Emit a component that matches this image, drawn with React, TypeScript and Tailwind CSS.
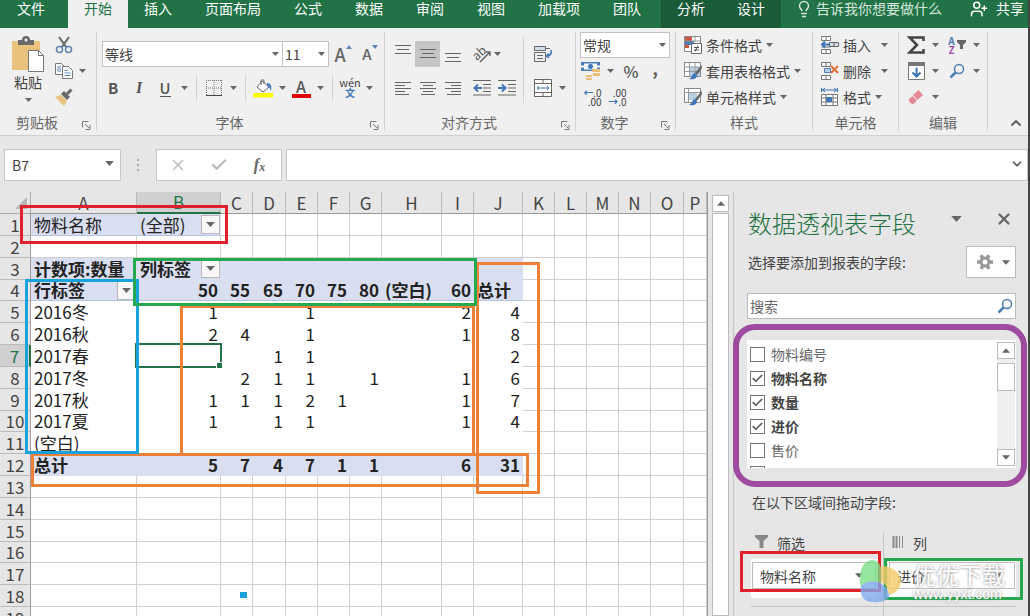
import React, { useState } from "react";
import { Check, ChevronDown, ChevronUp, Lightbulb, UserPlus, X } from "lucide-react";

const TABS = ["插入", "页面布局", "公式", "数据", "审阅", "视图", "加载项", "团队"];

const COLUMNS = [
  { id: "A", width: "w-[106px]" },
  { id: "B", width: "w-[84px]" },
  { id: "C", width: "w-8" },
  { id: "D", width: "w-[33px]" },
  { id: "E", width: "w-8" },
  { id: "F", width: "w-8" },
  { id: "G", width: "w-8" },
  { id: "H", width: "w-[60px]" },
  { id: "I", width: "w-8" },
  { id: "J", width: "w-[49px]" },
  { id: "K", width: "w-8" },
  { id: "L", width: "w-8" },
  { id: "M", width: "w-8" },
  { id: "N", width: "w-8" },
  { id: "O", width: "w-[33px]" },
  { id: "P", width: "" },
];

const CELLS: Record<number, Record<string, string>> = {
  1: { A: "物料名称", B: "(全部)" },
  3: { A: "计数项:数量", B: "列标签" },
  4: { A: "行标签", B: "50", C: "55", D: "65", E: "70", F: "75", G: "80", H: "(空白)", I: "60", J: "总计" },
  5: { A: "2016冬", B: "1", E: "1", I: "2", J: "4" },
  6: { A: "2016秋", B: "2", C: "4", E: "1", I: "1", J: "8" },
  7: { A: "2017春", D: "1", E: "1", J: "2" },
  8: { A: "2017冬", C: "2", D: "1", E: "1", G: "1", I: "1", J: "6" },
  9: { A: "2017秋", B: "1", C: "1", D: "1", E: "2", F: "1", I: "1", J: "7" },
  10: { A: "2017夏", B: "1", D: "1", E: "1", I: "1", J: "4" },
  11: { A: "(空白)" },
  12: { A: "总计", B: "5", C: "7", D: "4", E: "7", F: "1", G: "1", I: "6", J: "31" },
};

const ROWS = Array.from({ length: 19 }, (_, i) => i + 1);
const SHORT_ROWS = [4, 10, 16];
const FILTER_CELLS = ["B1", "B3", "A4"];

const FIELDS = [
  { name: "物料编号", checked: false },
  { name: "物料名称", checked: true },
  { name: "数量", checked: true },
  { name: "进价", checked: true },
  { name: "售价", checked: false },
];

function Caret({ className = "w-[7px] h-1" }: { className?: string }) {
  return (
    <svg viewBox="0 0 7 4" className={`shrink-0 fill-[#666] ${className}`}>
      <path d="M0 0h7L3.5 4z" />
    </svg>
  );
}

function Magnifier({ className = "" }: { className?: string }) {
  return (
    <svg viewBox="0 0 16 16" className={`w-4 h-4 fill-none stroke-[#4a7db5] ${className}`}>
      <circle cx="10" cy="6" r="4.5" strokeWidth="1.5" />
      <path d="M6.5 9.500L1.500 14.500" strokeWidth="2.5" />
    </svg>
  );
}

function ToolButton({
  label,
  className = "w-[25px] h-[25px]",
  children,
}: {
  label: string;
  className?: string;
  children: React.ReactNode;
}) {
  return (
    <button aria-label={label} className={`flex items-center justify-center shrink-0 ${className}`}>
      {children}
    </button>
  );
}

// icon with a drop-down arrow to its right
function SplitButton({ label, children }: { label: string; children: React.ReactNode }) {
  return (
    <button aria-label={label} className="flex items-center h-[25px] shrink-0">
      <span className="w-[22px] flex justify-center">{children}</span>
      <span className="w-4 flex justify-center">
        <Caret />
      </span>
    </button>
  );
}

function RibbonSelect({ label, value, className }: { label: string; value: string; className: string }) {
  return (
    <div className={`relative ${className}`}>
      <select
        aria-label={label}
        className="appearance-none w-full h-full bg-white border border-[#c3c3c3] pl-0.5 text-sm text-[#444]"
      >
        <option>{value}</option>
      </select>
      <Caret className="w-[7px] h-1 absolute right-1 top-1/2 -mt-0.5 pointer-events-none" />
    </div>
  );
}

function Group({
  title,
  width,
  launcher = false,
  children,
}: {
  title: string;
  width: string;
  launcher?: boolean;
  children: React.ReactNode;
}) {
  return (
    <section className={`flex flex-col shrink-0 border-r border-[#d2d2d2] ${width}`}>
      <div className="flex-1">{children}</div>
      <div className="flex items-center h-[18px] text-sm leading-[18px] text-[#666]">
        <span className="flex-1 text-center">{title}</span>
        {launcher && (
          <button aria-label={`${title}设置`} className="w-[22px] pt-1.5 pl-2">
            <svg viewBox="0 0 9 9" className="w-[9px] h-[9px] fill-none stroke-[#777]">
              <path d="M.5 6.5v-6h6M3 3l4 4M8 4v4.5H3.5" />
            </svg>
          </button>
        )}
      </div>
    </section>
  );
}

function Lines({ d }: { d: string }) {
  return (
    <svg viewBox="0 0 16 16" className="w-4 h-4 fill-none stroke-[#666]">
      <path d={d} />
    </svg>
  );
}

function Separator() {
  return <span className="w-px h-[26px] bg-[#d2d2d2] ml-1 mr-[6px]" />;
}

function ClipboardGroup() {
  return (
    <Group title="剪贴板" width="w-[97px]" launcher>
      <div className="flex pl-3">
        <button className="flex flex-col items-center w-8 pt-1 text-sm leading-5 text-[#444]">
          <svg viewBox="0 0 34 36" className="w-[34px] h-9">
            <path d="M1 5h28v29H1z" fill="#e9c27c" />
            <path d="M7 9V4h4a4 4 0 0 1 8 0h4v5z" fill="#6a6a6a" />
            <circle cx="15" cy="4" r="1.5" fill="#f0f0f0" />
            <path d="M17.5 14.500h10l5 5v16h-15z" fill="#fff" stroke="#777" />
            <path d="M27.500 14.500v5h5" fill="none" stroke="#777" />
          </svg>
          <span>粘贴</span>
          <Caret className="w-[7px] h-1 mt-1.5" />
        </button>
        <div className="flex flex-col ml-[9px]">
          <ToolButton label="剪切" className="w-[22px] h-[26px]">
            <svg viewBox="0 0 18 18" className="w-[18px] h-[18px] fill-none">
              <path d="M4 1l7.500 10.500M14 1L6.500 11.500" stroke="#666" strokeWidth="2" />
              <circle cx="4.500" cy="13.500" r="3" stroke="#5d86b5" strokeWidth="1.500" />
              <circle cx="13.500" cy="13.500" r="3" stroke="#5d86b5" strokeWidth="1.500" />
            </svg>
          </ToolButton>
          <div className="flex items-center">
            <ToolButton label="复制" className="w-[22px] h-[26px]">
              <svg viewBox="0 0 18 18" className="w-[18px] h-[18px]">
                <path d="M.5 1.500h6l3 3v8h-9z" fill="#fff" stroke="#777" />
                <path d="M7.500 4.500h6l4 4v8h-10z" fill="#fff" stroke="#777" />
                <path d="M2 5h4M2 7h4M2 9h4M9.500 8.500h3M9.500 11h6M9.500 13.500h6" stroke="#5d86b5" />
              </svg>
            </ToolButton>
            <Caret className="w-[7px] h-1 ml-1" />
          </div>
          <ToolButton label="格式刷" className="w-[22px] h-[26px]">
            <svg viewBox="0 0 18 18" className="w-[18px] h-[18px]">
              <path d="M0 9l6-2 6 6-3 5z" fill="#e9c27c" />
              <path d="M6 6l3-3 6 6-3 3z" fill="#666" />
              <path d="M12 6l4.500-4.500" stroke="#666" strokeWidth="3" />
            </svg>
          </ToolButton>
        </div>
      </div>
    </Group>
  );
}

function FontGroup() {
  return (
    <Group title="字体" width="w-[288px]" launcher>
      <div className="flex items-center pt-[9px] pl-[5px]">
        <RibbonSelect label="字体" value="等线" className="w-[181px] h-[26px]" />
        <RibbonSelect label="字号" value="11" className="w-[47px] h-[26px] -ml-px" />
        <ToolButton label="增大字号" className="w-[28px] h-[26px]">
          <span className="text-lg leading-5 text-[#666] font-medium">A</span>
          <svg viewBox="0 0 6 4" className="w-1.5 h-1 mb-3.5 fill-[#5d86b5]">
            <path d="M0 4h6L3 0z" />
          </svg>
        </ToolButton>
        <ToolButton label="减小字号" className="w-[26px] h-[26px]">
          <span className="text-[15px] leading-5 text-[#666] font-medium">A</span>
          <svg viewBox="0 0 6 4" className="w-1.5 h-1 mb-3.5 fill-[#5d86b5]">
            <path d="M0 0h6L3 4z" />
          </svg>
        </ToolButton>
      </div>
      <div className="flex items-center mt-2 pl-[3px] text-[#555]">
        <ToolButton label="加粗" className="w-[26px] h-[25px] font-bold text-[15px]">B</ToolButton>
        <ToolButton label="倾斜" className="w-[26px] h-[25px] italic font-['Liberation_Serif',serif] text-base font-bold">
          I
        </ToolButton>
        <span className="w-0.5" />
        <SplitButton label="下划线">
          <span className="text-[15px] leading-4 font-medium border-b border-[#555]">U</span>
        </SplitButton>
        <Separator />
        <SplitButton label="边框">
          <svg viewBox="0 0 16 16" className="w-4 h-4 fill-none stroke-[#777]">
            <path d="M0 .5h16M.5 0v15M15.500 0v15M8 0v15M0 8h16" strokeDasharray="1 1" />
            <path d="M0 15.500h16" stroke="#444" />
          </svg>
        </SplitButton>
        <Separator />
        <SplitButton label="填充颜色">
          <svg viewBox="0 0 20 20" className="w-5 h-5">
            <path d="M0 15h20v4.500H0z" fill="#ffff00" />
            <path d="M9 3l7 6-6 5-6-5z" fill="#fff" stroke="#666" />
            <path d="M8 7V2.500a2 2 0 0 1 3 0V6" fill="none" stroke="#666" />
            <path d="M14 5c4 0 5 3 4 8-1-3-2-4-4-5z" fill="#4a7db5" />
          </svg>
        </SplitButton>
        <SplitButton label="字体颜色">
          <span className="w-[19px] h-[19px] text-base leading-[15px] font-medium text-center border-b-4 border-[#e00000]">
            A
          </span>
        </SplitButton>
        <Separator />
        <SplitButton label="拼音">
          <span className="flex flex-col items-center text-[#444]">
            <span className="text-[11px] leading-[9px]">wén</span>
            <span className="text-[10px] leading-[11px] font-bold text-[#3f76b5]">文</span>
          </span>
        </SplitButton>
      </div>
    </Group>
  );
}

function AlignmentGroup() {
  return (
    <Group title="对齐方式" width="w-[191px]" launcher>
      <div className="flex pl-[5px] pt-[9px]">
        <div className="w-[133px]">
          <div className="flex">
            <ToolButton label="顶端对齐" className="w-[25px] h-[25px] pb-1.5">
              <Lines d="M0 2.500h16M2 6.500h12M0 10.500h16" />
            </ToolButton>
            <ToolButton label="垂直居中" className="w-[25px] h-[26px] bg-[#c5c5c5]">
              <Lines d="M0 3.500h16M2 7.500h12M0 11.500h16" />
            </ToolButton>
            <ToolButton label="底端对齐" className="w-[25px] h-[26px] pt-1">
              <Lines d="M0 5.500h16M2 9.500h12M0 13.500h16" />
            </ToolButton>
            <span className="w-1" />
            <ToolButton label="方向">
              <svg viewBox="0 0 20 20" className="w-5 h-5">
                <text x="1" y="13" transform="rotate(-42 8 10)" fontSize="12" fill="#555">
                  ab
                </text>
                <path d="M8 18L18 8M14 8h4v4" fill="none" stroke="#666" strokeWidth="1.500" />
              </svg>
            </ToolButton>
            <Caret className="w-[7px] h-1 mt-[11px]" />
          </div>
          <div className="flex mt-2">
            <ToolButton label="左对齐">
              <Lines d="M0 2.500h16M0 5.500h10M0 8.500h16M0 11.500h10M0 14.500h14" />
            </ToolButton>
            <ToolButton label="居中">
              <Lines d="M0 2.500h16M3 5.500h10M0 8.500h16M3 11.500h10M1 14.500h14" />
            </ToolButton>
            <ToolButton label="右对齐">
              <Lines d="M0 2.500h16M6 5.500h10M0 8.500h16M6 11.500h10M2 14.500h14" />
            </ToolButton>
            <span className="w-1" />
            <ToolButton label="减少缩进">
              <svg viewBox="0 0 18 16" className="w-[18px] h-4 fill-none stroke-[#666]">
                <path d="M0 .5h18M10 4.500h8M10 8h8M10 11.500h8M0 15h18" />
                <path d="M9 8H2M5 4.500L1.500 8 5 11.500" stroke="#3f76b5" strokeWidth="2" />
              </svg>
            </ToolButton>
            <ToolButton label="增加缩进">
              <svg viewBox="0 0 18 16" className="w-[18px] h-4 fill-none stroke-[#666]">
                <path d="M0 .5h18M10 4.500h8M10 8h8M10 11.500h8M0 15h18" />
                <path d="M0 8h7M4 4.500L7.500 8 4 11.500" stroke="#3f76b5" strokeWidth="2" />
              </svg>
            </ToolButton>
          </div>
        </div>
        <span className="w-px h-[66px] -mt-1 bg-[#d2d2d2]" />
        <div className="ml-[6px]">
          <ToolButton label="自动换行" className="w-[25px] h-[26px]">
            <svg viewBox="0 0 20 18" className="w-5 h-[18px] fill-none stroke-[#666]">
              <path d="M1.500 1.500h11v4h-11z" fill="#d3e0ee" />
              <path d="M12 3.500h5M1.500 7.500h11v9h-11zM4 10.500h6M4 13.500h6" />
              <path d="M18 5c1 4-1 6-4 6M16 8.500L13.500 11l2.500 2" stroke="#3f76b5" strokeWidth="1.500" />
            </svg>
          </ToolButton>
          <div className="flex items-center mt-2">
            <ToolButton label="合并后居中">
              <svg viewBox="0 0 18 18" className="w-[18px] h-[18px] fill-none stroke-[#666]">
                <path d="M.5.500h17v17H.5z" fill="#fff" />
                <path d="M.5 4.500h17M.5 13.500h17M9 .5v4M9 13.500v4" />
                <path d="M3 9h12M5 7L3 9l2 2M13 7l2 2-2 2" stroke="#3f76b5" />
              </svg>
            </ToolButton>
            <Caret className="w-[7px] h-1 ml-1" />
          </div>
        </div>
      </div>
    </Group>
  );
}

function NumberGroup() {
  return (
    <Group title="数字" width="w-[100px]" launcher>
      <div className="pl-1">
        <RibbonSelect label="数字格式" value="常规" className="w-[90px] h-[26px]" />
        <div className="flex items-center h-[26px] text-[#555]">
          <SplitButton label="会计数字格式">
            <svg viewBox="0 0 20 20" className="w-5 h-5">
              <path d="M0 1h19v9H0z" fill="#4a7db5" />
              <path d="M3 2.500h13v6H3zM0 4.500h19v2H0z" fill="#f5f8fb" />
              <circle cx="9.500" cy="5.500" r="2.500" fill="#3f76b5" />
              <path d="M11 8h8v3h-8zM12 12h7v3h-7zM5 14h6v2H5zM5 17h6v2H5z" fill="#ecc07a" />
            </svg>
          </SplitButton>
          <ToolButton label="百分比样式" className="w-[26px] h-[25px] text-base font-medium">%</ToolButton>
          <ToolButton label="千位分隔样式" className="w-[22px] h-[25px] pb-1.5 text-base font-bold">,</ToolButton>
        </div>
        <div className="flex items-center h-[26px] text-[10px] leading-[9px] text-[#444]">
          <ToolButton label="增加小数位数" className="w-[25px] h-[25px]">
            <span className="text-right">
              <span className="block">
                <b className="text-[#3f76b5]">←</b>.0
              </span>
              <span className="block">.00</span>
            </span>
          </ToolButton>
          <ToolButton label="减少小数位数" className="w-[25px] h-[25px]">
            <span className="text-right">
              <span className="block">.00</span>
              <span className="block">
                <b className="text-[#3f76b5]">→</b>.0
              </span>
            </span>
          </ToolButton>
        </div>
      </div>
    </Group>
  );
}

function TextTool({ text, wide = false, children }: { text: string; wide?: boolean; children: React.ReactNode }) {
  return (
    <button className="flex items-center h-[26px] text-sm text-[#444] whitespace-nowrap">
      <svg viewBox="0 0 18 18" className="w-[18px] h-[18px] mr-1 shrink-0">
        {children}
      </svg>
      {text}
      <Caret className={wide ? "w-[7px] h-1 ml-2.5" : "w-[7px] h-1 ml-1"} />
    </button>
  );
}

function StylesGroup() {
  return (
    <Group title="样式" width="w-[137px]">
      <div className="pl-2">
        <TextTool text="条件格式">
          <path d="M.5.500h16v15H.5z" fill="#fff" stroke="#888" />
          <path d="M1 1h7v4H1zM1 9h4v3H1z" fill="#d0563f" />
          <path d="M1 5h9v4H1z" fill="#4a7db5" />
          <path d="M11 1v5M1 5h15" stroke="#999" />
          <path d="M7.500 7.500h10v10h-10z" fill="#fff" stroke="#666" />
          <path d="M10 11.500h5M10 14h5M14 9.500l-3 6" stroke="#555" />
        </TextTool>
        <TextTool text="套用表格格式">
          <path d="M.5.500h16v14H.5z" fill="#fff" stroke="#888" />
          <path d="M5 5h11v9H5z" fill="#b9cfe6" />
          <path d="M.5 5h16M.5 9.500h16M5.500.5v14M11 .5v14" stroke="#999" />
          <path d="M17.500 3L11 11l2 2 5-7z" fill="#666" />
          <path d="M11 11c-3 0-2 4-6 6 4 1 8 0 8-4z" fill="#3f76b5" />
        </TextTool>
        <TextTool text="单元格样式">
          <path d="M.5.500h16v14H.5z" fill="#fff" stroke="#888" />
          <path d="M4 5h9v7H4z" fill="#b9cfe6" />
          <path d="M.5 4.500h16M4.500.5v14" stroke="#999" />
          <path d="M17.500 3L11 11l2 2 5-7z" fill="#666" />
          <path d="M11 11c-3 0-2 4-6 6 4 1 8 0 8-4z" fill="#3f76b5" />
        </TextTool>
      </div>
    </Group>
  );
}

function CellsGroup() {
  return (
    <Group title="单元格" width="w-[86px]">
      <div className="pl-2">
        <TextTool text="插入" wide>
          <path d="M.5.500h9v4h-9zM5 .5v4M.5 13.500h9v4h-9zM5 13.500v4M.5 11h9" fill="#fff" stroke="#777" />
          <path d="M8.500 6.500h9v4h-9zM13 6.500v4" fill="#d3dce6" stroke="#666" />
          <path d="M9 8.500H1M4 5.500l-3 3 3 3" fill="none" stroke="#3f76b5" strokeWidth="2" />
        </TextTool>
        <TextTool text="删除" wide>
          <path d="M.5.500h9v4h-9zM5 .5v4M.5 13.500h9v4h-9zM5 13.500v4" fill="#fff" stroke="#777" />
          <path d="M3.500 6.500h6v4h-6z" fill="#b9cfe6" stroke="#4a7db5" />
          <path d="M10 4l7 7M17 4l-7 7" stroke="#e06c3c" strokeWidth="2" />
        </TextTool>
        <TextTool text="格式">
          <path d="M1 2h15M4 0L1.500 2 4 4M13 0l2.500 2L13 4M.5 0v4M16.500 0v4" fill="none" stroke="#3f76b5" />
          <path d="M.5 6.500h16v11H.5z" fill="#fff" stroke="#777" />
          <path d="M.5 10h16M.5 14h16M5 6.500v11M12 6.500v11" stroke="#777" />
          <path d="M5 9h6v5H5z" fill="#3f76b5" />
        </TextTool>
      </div>
    </Group>
  );
}

function EditingGroup() {
  return (
    <Group title="编辑" width="w-[89px]">
      <div className="grid grid-cols-2 pl-1.5">
        <div className="h-[26px]">
          <SplitButton label="自动求和">
            <svg viewBox="0 0 18 18" className="w-[18px] h-[18px] fill-none stroke-[#444]">
              <path d="M16.500 5V1.500H2.500L10 9l-7.500 7.500h14V13" strokeWidth="2.5" />
            </svg>
          </SplitButton>
        </div>
        <div className="h-[26px]">
          <SplitButton label="排序和筛选">
            <span className="flex items-center">
              <span className="flex flex-col text-[10px] leading-[9px] font-bold text-[#4a7db5]">
                A<span className="text-[#9c4fb0]">Z</span>
              </span>
              <svg viewBox="0 0 9 9" className="w-[9px] h-[9px] ml-0.5 fill-[#666]">
                <path d="M0 0h9v2L6 5v4H3V5L0 2z" />
              </svg>
            </span>
          </SplitButton>
        </div>
        <div className="h-[26px]">
          <SplitButton label="填充">
            <svg viewBox="0 0 17 18" className="w-[17px] h-[18px]">
              <path d="M.5.500h16v17H.5z" fill="#fff" stroke="#777" />
              <path d="M0 0h17v4H0z" fill="#777" />
              <path d="M8.500 5.500V14M4.500 10.500l4 4 4-4" fill="none" stroke="#3f76b5" strokeWidth="2" />
            </svg>
          </SplitButton>
        </div>
        <div className="h-[26px]">
          <SplitButton label="查找和选择">
            <Magnifier />
          </SplitButton>
        </div>
        <SplitButton label="清除">
          <svg viewBox="0 0 16 16" className="w-4 h-4">
            <path d="M10.500 1L15 6l-5.500 5L5 6z" fill="#e58a98" />
            <path d="M4.500 7L9 11.500 5.500 15H3.500L1 12v-2z" fill="#e58a98" />
          </svg>
        </SplitButton>
      </div>
    </Group>
  );
}

function cellClass(row: number, col: string) {
  const colIndex = COLUMNS.findIndex((c) => c.id === col);
  const inPivot = colIndex <= 9;
  if (row === 1 && colIndex <= 1) return "bg-[#d9dff0] border-r-[#d9dff0] border-b-[#b3c3e4]";
  if (row === 3 && inPivot) return "bg-[#d9dff0] border-[#d9dff0] font-bold";
  if (row === 4 && inPivot) return "bg-[#d9dff0] border-r-[#d9dff0] border-b-[#b3c3e4] font-bold";
  if (row === 12 && inPivot) return "bg-[#d9dff0] border-[#d9dff0] font-bold";
  if (row > 4 && row < 12 && inPivot) return "bg-white border-white";
  return "bg-white border-[#d0d0d0]";
}

function FilterButton({ label }: { label: string }) {
  return (
    <button
      aria-label={label}
      className="flex items-center justify-center w-[19px] h-[19px] bg-[#f7f7f7] border border-[#b8b8b8] shrink-0"
    >
      <Caret className="w-[9px] h-[5px]" />
    </button>
  );
}

function Sheet() {
  return (
    <div className="flex-1 min-w-0 relative pt-2 overflow-hidden">
      <div className="h-full overflow-hidden border-r border-[#999]">
        <table className="table-fixed w-full border-separate border-spacing-0 text-[17px] leading-5 text-[#222]">
          <colgroup>
            <col className="w-[31px]" />
            {COLUMNS.map((c) => (
              <col key={c.id} className={c.width} />
            ))}
          </colgroup>
          <thead>
            <tr className="h-[22px] bg-[#e6e6e6] text-[#444]">
              <th className="border-r border-b border-[#aaa] p-0">
                <svg viewBox="0 0 12 12" className="w-3 h-3 ml-auto mr-[3px] fill-[#b5b5b5]">
                  <path d="M12 0v12H0z" />
                </svg>
              </th>
              {COLUMNS.map((c) => (
                <th
                  key={c.id}
                  className={
                    c.id === "B"
                      ? "border-r border-b-2 border-r-[#bbb] border-b-[#217346] bg-[#d0d0d0] text-[#217346] font-normal p-0"
                      : "border-r border-b border-r-[#bbb] border-b-[#999] font-normal p-0"
                  }
                >
                  {c.id}
                </th>
              ))}
            </tr>
          </thead>
          <tbody>
            {ROWS.map((row) => (
              <tr key={row} className={SHORT_ROWS.includes(row) ? "h-[21px]" : "h-[22px]"}>
                <th
                  className={
                    row === 7
                      ? "border-r-2 border-b border-r-[#217346] border-b-[#bbb] bg-[#d0d0d0] text-[#217346] font-normal p-0"
                      : "border-r border-b border-r-[#999] border-b-[#bbb] bg-[#e6e6e6] text-[#444] font-normal p-0"
                  }
                >
                  {row}
                </th>
                {COLUMNS.map((c) => {
                  const value = CELLS[row]?.[c.id] ?? "";
                  const numeric = /^\d+$/.test(value);
                  return (
                    <td key={c.id} className={`border-r border-b p-0 whitespace-nowrap ${cellClass(row, c.id)}`}>
                      {FILTER_CELLS.includes(c.id + row) ? (
                        <div className="flex justify-between items-center h-5 pl-[3px]">
                          {value}
                          <FilterButton label={`筛选${value}`} />
                        </div>
                      ) : (
                        <div className={numeric ? "text-right pr-0.5" : "pl-[3px]"}>{value}</div>
                      )}
                    </td>
                  );
                })}
              </tr>
            ))}
          </tbody>
        </table>
      </div>

      {/* active cell and its fill handle */}
      <div className="absolute left-[135px] top-[159px] w-[87px] h-[25px] border-2 border-[#217346]">
        <span className="absolute -right-[3px] -bottom-[3px] w-[7px] h-[7px] bg-[#217346] border border-white" />
      </div>

      {/* markers over the pivot table regions */}
      <div className="absolute left-[31px] top-[269px] w-[498px] h-[34px] border-[3px] border-[#ee8139]" />
      <div className="absolute left-[180px] top-[121px] w-[295px] h-[151px] border-[3px] border-[#ee8139]" />
      <div className="absolute left-[476px] top-[78px] w-[64px] h-[232px] border-[3px] border-[#ee8139]" />
      <div className="absolute left-[25px] top-[95px] w-[114px] h-[175px] border-[3px] border-[#18a3dc]" />
      <div className="absolute left-[133px] top-[74px] w-[344px] h-[48px] border-[3px] border-[#25a84e]" />
      <div className="absolute left-[20px] top-[21px] w-[208px] h-[39px] border-[3px] border-[#e0202b]" />
      <div className="absolute left-[240px] top-[408px] w-[7px] h-[6px] bg-[#18a3dc]" />
    </div>
  );
}

function AreaBox({ value, marker }: { value: string; marker: string }) {
  return (
    <div className="relative h-[39px] bg-white pt-[3px] px-px mt-[5px]">
      <button className="flex items-center justify-between w-full h-[27px] border border-[#bbb] bg-white pl-[7px] pr-3 text-sm text-[#444]">
        {value}
        <Caret className="w-2 h-[5px]" />
      </button>
      <div className={`absolute pointer-events-none border-[3px] ${marker}`} />
    </div>
  );
}

function FieldPane() {
  const [fields, setFields] = useState(FIELDS);

  const toggle = (name: string) => {
    setFields((prev) => prev.map((f) => (f.name === name ? { ...f, checked: !f.checked } : f)));
  };

  return (
    <aside className="flex flex-col w-[295px] shrink-0 mt-2 pt-[15px] pl-[13px] pr-3 border-l border-[#c4c4c4] text-sm text-[#444]">
      <div className="flex">
        <h2 className="flex-1 text-2xl leading-8 font-light text-[#1f7244] pl-px">数据透视表字段</h2>
        <button aria-label="窗格选项" className="w-6 h-6">
          <Caret className="w-[11px] h-1.5 mx-auto" />
        </button>
        <button aria-label="关闭" className="w-6 h-6 ml-6">
          <X className="w-[18px] h-[18px] mx-auto text-[#666]" strokeWidth={3} />
        </button>
      </div>

      <div className="flex items-center justify-between mt-[7px] pl-px">
        <span>选择要添加到报表的字段:</span>
        <button
          aria-label="工具"
          className="flex items-center justify-between w-[50px] h-8 pl-2.5 pr-[5px] bg-white border border-[#bbb]"
        >
          <svg viewBox="0 0 16 16" className="w-4 h-4 fill-none stroke-[#999]">
            <circle cx="8" cy="8" r="4" strokeWidth="3" />
            <path
              d="M12.500 8H16M0 8h3.500M10.300 11.900l1.700 3M4 1.100l1.700 3M5.700 11.900l-1.700 3M12 1.100l-1.700 3"
              strokeWidth="3.5"
            />
          </svg>
          <Caret className="w-2 h-[5px]" />
        </button>
      </div>

      <div className="relative mt-[15px]">
        <input
          aria-label="搜索字段"
          placeholder="搜索"
          className="block w-full h-[26px] px-0.5 bg-white border border-[#bbb] placeholder:text-[#666]"
        />
        <Magnifier className="absolute right-[3px] top-[5px]" />
      </div>

      <div className="relative mt-[21px]">
        <div className="flex h-32 bg-white overflow-hidden pl-[3px] pr-px">
          <div className="flex-1 pt-0.5">
            {fields.map((f) => (
              <label key={f.name} className={`flex items-center h-6 ${f.checked ? "font-bold" : "text-[#666]"}`}>
                <span className="relative w-[15px] h-[15px] mr-1.5">
                  <input
                    type="checkbox"
                    checked={f.checked}
                    onChange={() => toggle(f.name)}
                    className="block appearance-none w-[15px] h-[15px] border border-[#777] bg-white"
                  />
                  {f.checked && (
                    <Check className="absolute inset-0 w-[15px] h-[15px] p-px text-[#555] pointer-events-none" strokeWidth={3} />
                  )}
                </span>
                {f.name}
              </label>
            ))}
            <input type="checkbox" aria-label="更多字段" className="block appearance-none w-[15px] h-[15px] mt-1 border border-[#777]" />
          </div>
          <div className="flex flex-col w-[18px] my-0.5 bg-[#f0f0f0]">
            <button aria-label="向上滚动" className="flex items-center justify-center h-[17px] bg-white border border-[#bbb]">
              <Caret className="w-2 h-[5px] rotate-180" />
            </button>
            <div className="h-7 mt-1 bg-white border border-[#bbb]" />
            <button aria-label="向下滚动" className="flex items-center justify-center h-[17px] mt-auto bg-white border border-[#bbb]">
              <Caret className="w-2 h-[5px]" />
            </button>
          </div>
        </div>
        <div className="absolute -left-[14px] -right-[11px] -top-4 -bottom-[19px] rounded-[22px] border-[6px] border-[#9d4a9f] pointer-events-none" />
      </div>

      <p className="mt-6 pl-[5px] leading-5">在以下区域间拖动字段:</p>

      <div className="relative flex flex-1 mt-5">
        <div className="w-[137px] pl-1 border-r border-[#c4c4c4]">
          <div className="flex items-center h-[22px] pl-1">
            <svg viewBox="0 0 13 13" className="w-[13px] h-[13px] mr-[9px] mb-1 fill-[#8a8a8a]">
              <path d="M0 0h13v2L8.500 6v7h-4V6L0 2z" />
            </svg>
            筛选
          </div>
          <div className="pr-1.5">
            <AreaBox value="物料名称" marker="border-[#e0202b] -left-[11px] -right-1 -top-2 bottom-1.5" />
          </div>
          <div className="mt-2 border-t border-[#c4c4c4]" />
        </div>
        <div className="flex-1">
          <div className="flex items-center h-[22px] pl-2">
            <svg viewBox="0 0 11 12" className="w-[11px] h-3 mr-2.5 mb-0.5 stroke-[#8a8a8a]">
              <path d="M1.500 0v12M4.500 0v12" strokeWidth="2" />
              <path d="M7.500 0v12M10.500 0v12" />
            </svg>
            列
          </div>
          <div className="pl-1">
            <AreaBox value="进价" marker="border-[#25a84e] -left-1 -right-[7px] -top-px -bottom-0.5" />
          </div>
          <div className="mt-2 border-t border-[#c4c4c4]" />
        </div>

        {/* site watermark */}
        <div className="absolute left-28 top-7 flex pointer-events-none">
          <svg viewBox="0 0 44 44" className="w-11 h-11 opacity-80">
            <path d="M13 0c5 0 9 4 9 9v18C14 20 8 22 2 27-2 14 4 0 13 0z" fill="#7ddf86" />
            <path d="M22 6c10 0 20 6 20 15 0 8-7 13-12 14-1-8-4-12-8-13z" fill="#f6c969" />
            <path d="M2 26c6-6 15-6 20-2 6 3 9 9 8 14-6 5-20 6-25 1-3-3-4-8-3-13z" fill="#7fa9ec" />
          </svg>
          <div className="ml-2.5 text-white whitespace-nowrap [text-shadow:0_0_3px_#777]">
            <div className="text-[23px] leading-7">优优下载</div>
            <div className="font-['Liberation_Sans',sans-serif] text-sm leading-3">www.yyxt.com</div>
          </div>
        </div>
      </div>
    </aside>
  );
}

export default function App() {
  return (
    <div className="flex flex-col h-screen overflow-hidden bg-[#e6e6e6] border-r-2 border-[#444] font-['Noto_Sans_CJK_SC',sans-serif]">
      <nav className="flex h-7 shrink-0 bg-[#217346] text-sm leading-4 text-white whitespace-nowrap">
        <button className="flex items-start w-[68px] pl-[17px]">文件</button>
        <button className="flex items-start px-4 bg-[#f0f0f0] text-[#217346]">开始</button>
        {TABS.map((tab) => (
          <button key={tab} className="flex items-start pl-4 pr-[17px]">
            {tab}
          </button>
        ))}
        <div className="flex ml-[3px] bg-[#1b5c38]">
          <button className="flex items-start px-4">分析</button>
          <button className="flex items-start px-4">设计</button>
        </div>
        <button className="flex items-start pl-3.5 text-[#d5e6dc]">
          <Lightbulb className="w-[18px] h-[18px] mr-[3px]" strokeWidth={2} />
          告诉我你想要做什么
        </button>
        <button className="flex items-start ml-auto pr-1">
          <UserPlus className="w-[18px] h-[18px] mr-2" strokeWidth={2} />
          共享
        </button>
      </nav>

      <div className="flex h-[108px] shrink-0 pt-1 pb-1 bg-[#f0f0f0] border-b border-[#d0d0d0]">
        <ClipboardGroup />
        <FontGroup />
        <AlignmentGroup />
        <NumberGroup />
        <StylesGroup />
        <CellsGroup />
        <EditingGroup />
        <button aria-label="折叠功能区" className="ml-auto mt-auto mr-1">
          <ChevronUp className="w-4 h-4 text-[#666]" strokeWidth={3} />
        </button>
      </div>

      <div className="flex items-center h-12 shrink-0 pt-2.5 pl-1 text-[#444]">
        <div className="relative w-[117px] h-8">
          <input aria-label="名称框" defaultValue="B7" className="w-full h-full px-[7px] bg-white border border-[#c8c8c8] text-sm" />
          <Caret className="absolute right-[7px] top-3 w-[9px] h-[5px]" />
        </div>
        <span className="flex flex-col gap-[3px] ml-4 mr-[17px]">
          <span className="w-0.5 h-0.5 bg-[#aaa]" />
          <span className="w-0.5 h-0.5 bg-[#aaa]" />
          <span className="w-0.5 h-0.5 bg-[#aaa]" />
        </span>
        <div className="flex items-center w-[126px] h-8 bg-white border border-[#c8c8c8]">
          <ToolButton label="取消" className="w-[41px] h-7">
            <X className="w-[18px] h-[18px] text-[#bbb]" />
          </ToolButton>
          <ToolButton label="输入" className="w-[41px] h-7">
            <Check className="w-[18px] h-[18px] text-[#bbb]" strokeWidth={3} />
          </ToolButton>
          <ToolButton label="插入函数" className="w-[41px] h-7 italic font-bold font-['Liberation_Serif',serif] text-[#666]">
            <span className="text-base">f</span>
            <span className="text-xs pt-1">x</span>
          </ToolButton>
        </div>
        <div className="relative flex-1 h-8 ml-1">
          <input aria-label="编辑栏" className="w-full h-full px-2 bg-white border border-[#c8c8c8] text-sm" />
          <ChevronDown className="absolute right-1 top-2 w-3.5 h-3.5 text-[#555]" strokeWidth={3} />
        </div>
      </div>

      <main className="flex flex-1 min-h-0">
        <Sheet />
        <div className="flex flex-col w-[17px] mx-1 mt-[11px]">
          <button aria-label="向上滚动" className="flex items-center justify-center h-[17px] bg-white border border-[#bbb]">
            <Caret className="w-2 h-[5px] rotate-180" />
          </button>
          <div className="flex-1 mt-px bg-white border border-[#bbb]" />
        </div>
        <FieldPane />
      </main>
    </div>
  );
}
